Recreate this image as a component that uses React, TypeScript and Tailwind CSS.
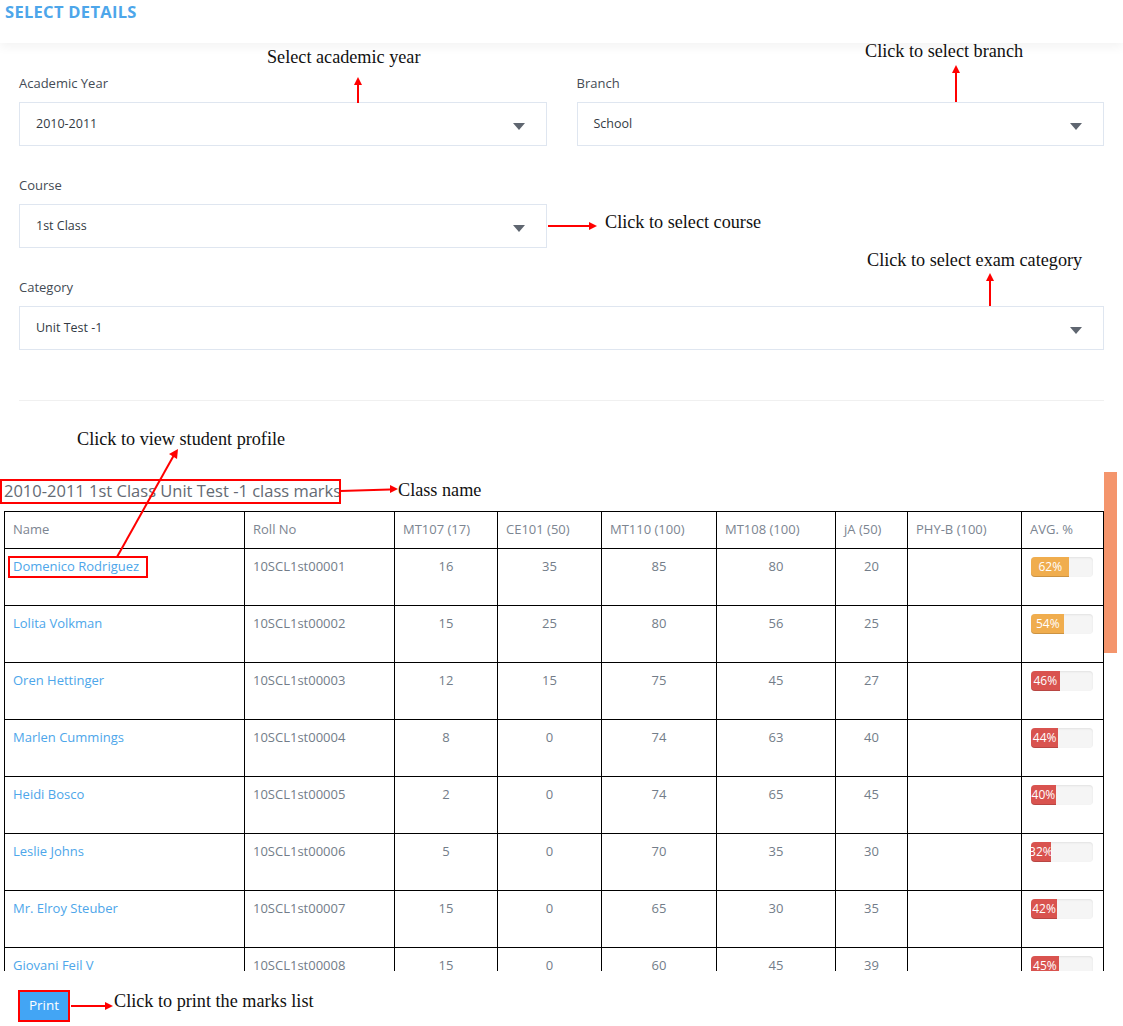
import React from "react";

type Row = {
  name: string;
  roll: string;
  m: (string | number)[];
  avg: number;
};

const rows: Row[] = [
  { name: "Domenico Rodriguez", roll: "10SCL1st00001", m: [16, 35, 85, 80, 20, ""], avg: 62 },
  { name: "Lolita Volkman", roll: "10SCL1st00002", m: [15, 25, 80, 56, 25, ""], avg: 54 },
  { name: "Oren Hettinger", roll: "10SCL1st00003", m: [12, 15, 75, 45, 27, ""], avg: 46 },
  { name: "Marlen Cummings", roll: "10SCL1st00004", m: [8, 0, 74, 63, 40, ""], avg: 44 },
  { name: "Heidi Bosco", roll: "10SCL1st00005", m: [2, 0, 74, 65, 45, ""], avg: 40 },
  { name: "Leslie Johns", roll: "10SCL1st00006", m: [5, 0, 70, 35, 30, ""], avg: 32 },
  { name: "Mr. Elroy Steuber", roll: "10SCL1st00007", m: [15, 0, 65, 30, 35, ""], avg: 42 },
  { name: "Giovani Feil V", roll: "10SCL1st00008", m: [15, 0, 60, 45, 39, ""], avg: 45 },
  { name: "Kaley Schmeler", roll: "10SCL1st00009", m: [14, 0, 55, 40, 30, ""], avg: 41 },
];

const headers = ["Name", "Roll No", "MT107 (17)", "CE101 (50)", "MT110 (100)", "MT108 (100)", "jA (50)", "PHY-B (100)", "AVG. %"];
const widths = [240, 150, 103, 104, 115, 119, 72, 114, 82];

function Caret() {
  return <span className="mt-[4px] w-0 h-0 border-l-[6px] border-r-[6px] border-t-[7px] border-l-transparent border-r-transparent border-t-[#5f6670]" />;
}

function Field({ label, value }: { label: string; value: string }) {
  return (
    <div>
      <div className="text-[13px] leading-[18px] text-[#444b55] mb-[10px]">{label}</div>
      <div className="h-[44px] border border-[#dfe6f0] flex items-center justify-between pl-[16px] pr-[21px] text-[12.5px] text-[#333a44]">
        <span>{value}</span>
        <Caret />
      </div>
    </div>
  );
}

function Bar({ pct }: { pct: number }) {
  const color = pct >= 50 ? "bg-[#f0ad4e]" : "bg-[#d9534f]";
  return (
    <div className="w-[62px] h-[20px] rounded-[4px] bg-[#f5f5f5] shadow-[inset_0_1px_2px_rgba(0,0,0,0.08)] flex">
      <div
        className={`${color} h-full rounded-l-[4px] shadow-[inset_0_-1px_0_rgba(0,0,0,0.15)] flex items-center justify-center text-white text-[12px] leading-[20px] whitespace-nowrap overflow-visible`}
        style={{ width: `${pct}%` }}
      >
        {pct}%
      </div>
    </div>
  );
}

export default function App() {
  return (
    <div className="relative w-[1123px] h-[1026px] overflow-hidden bg-white font-['Open_Sans',sans-serif]">
      {/* Header */}
      <div className="relative z-10 h-[43px] pl-[5px] bg-white shadow-[0_4px_10px_rgba(0,0,0,0.05)]">
        <span className="text-[16.5px] leading-[24px] font-bold text-[#4da6ea] tracking-[0.3px]">SELECT DETAILS</span>
      </div>

      {/* Form */}
      <div className="px-[19px] pt-[31px]">
        <div className="grid grid-cols-2 gap-x-[30px] gap-y-[30px]">
          <Field label="Academic Year" value="2010-2011" />
          <Field label="Branch" value="School" />
          <Field label="Course" value="1st Class" />
          <div />
          <div className="col-span-2">
            <Field label="Category" value="Unit Test -1" />
          </div>
        </div>
        <div className="mt-[50px] h-px bg-[#f0f0f0]" />
      </div>

      {/* Table section */}
      <div className="relative mt-[71px] w-[1117px] h-[499px] overflow-hidden">
        <div className="pl-[4px] pt-[7px]">
          <div className="text-[16.5px] leading-[24px] text-[#646a73] mb-[8px]">2010-2011 1st Class Unit Test -1 class marks</div>
          <table className="table-fixed border-collapse w-[1099px] text-[13px] text-[#737d89]">
            <colgroup>
              {widths.map((w, i) => (
                <col key={i} style={{ width: w }} />
              ))}
            </colgroup>
            <thead>
              <tr>
                {headers.map((h) => (
                  <th key={h} className="border border-black font-normal text-left align-top h-[37px] pl-[8px] pt-[8px] leading-[18px] text-[#7c8591]">
                    {h}
                  </th>
                ))}
              </tr>
            </thead>
            <tbody>
              {rows.map((r) => (
                <tr key={r.roll}>
                  <td className="border border-black align-top h-[57px] pl-[8px] pt-[8px] leading-[18px] text-[#4da6ea]">{r.name}</td>
                  <td className="border border-black align-top pl-[8px] pt-[8px] leading-[18px]">{r.roll}</td>
                  {r.m.map((v, i) => (
                    <td key={i} className="border border-black align-top text-center pt-[8px] leading-[18px]">
                      {v}
                    </td>
                  ))}
                  <td className="border border-black align-top pl-[9px] pt-[8px]">
                    <Bar pct={r.avg} />
                  </td>
                </tr>
              ))}
            </tbody>
          </table>
        </div>
        <div className="absolute right-0 top-0 w-[13px] h-[181px] bg-[#f4956c]" />
      </div>

      {/* Print */}
      <div className="pl-[18px] pt-[19px]">
        <button className="w-[52px] h-[32px] border-2 border-[#ff0000] bg-[#42a5f5] text-white text-[13.5px] leading-none">Print</button>
      </div>

      {/* Annotations */}
      <svg className="absolute inset-0 pointer-events-none" width="1123" height="1026" viewBox="0 0 1123 1026">
        <g stroke="#ff0000" strokeWidth="2" fill="none">
          <line x1="358" y1="103" x2="358" y2="84" />
          <line x1="956" y1="102" x2="956" y2="72" />
          <line x1="548" y1="226" x2="590" y2="226" />
          <line x1="990" y1="306" x2="990" y2="280" />
          <line x1="117" y1="557" x2="174" y2="455" />
          <line x1="340" y1="491" x2="390" y2="489.5" />
          <line x1="71" y1="1006" x2="105" y2="1006" />
          <rect x="1" y="480" width="339" height="23" />
          <rect x="9" y="557" width="138" height="20" />
        </g>
        <g fill="#ff0000">
          <polygon points="358,77 354,85 362,85" />
          <polygon points="956,65 952,73 960,73" />
          <polygon points="597,226 589,222 589,230" />
          <polygon points="990,273 986,281 994,281" />
          <polygon points="178,449 169,454 177,459" />
          <polygon points="398,489 390,485 390,493" />
          <polygon points="113,1006 105,1002 105,1010" />
        </g>
      </svg>
      <div className="absolute inset-0 pointer-events-none font-['Liberation_Serif',serif] text-[18.2px] leading-[21px] text-[#111]">
        <div className="absolute left-[267px] top-[47px]">Select academic year</div>
        <div className="absolute left-[865px] top-[41px]">Click to select branch</div>
        <div className="absolute left-[605px] top-[212px]">Click to select course</div>
        <div className="absolute left-[867px] top-[250px]">Click to select exam category</div>
        <div className="absolute left-[77px] top-[429px]">Click to view student profile</div>
        <div className="absolute left-[398px] top-[480px]">Class name</div>
        <div className="absolute left-[114px] top-[991px]">Click to print the marks list</div>
      </div>
    </div>
  );
}
